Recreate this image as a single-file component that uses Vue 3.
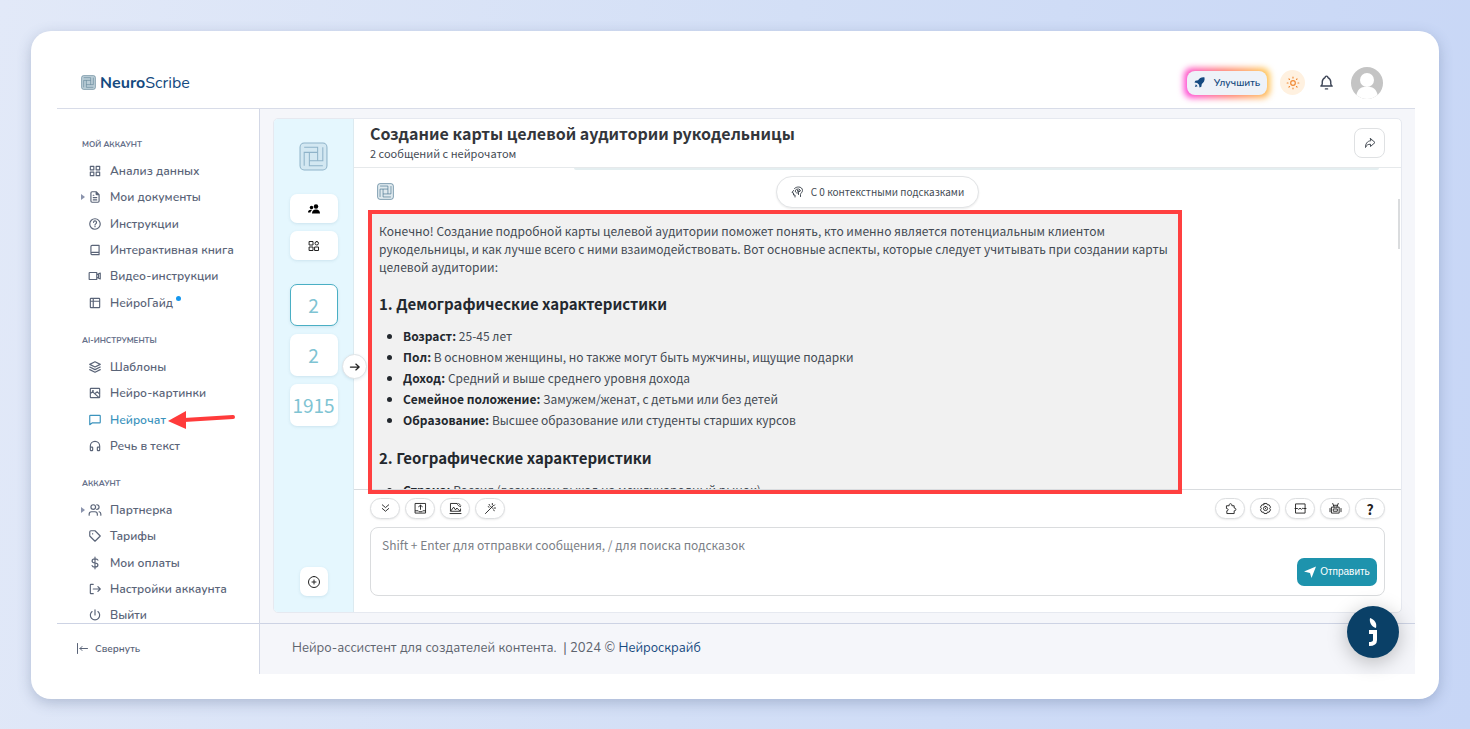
<script setup>
import { ref } from 'vue'

const message = ref('')

const icons = {
  grid: 'M4 4h6v6H4zM14 4h6v6h-6zM4 14h6v6H4zM14 14h6v6h-6z',
  file: 'M14 3v4a1 1 0 0 0 1 1h4M17 21H7a2 2 0 0 1-2-2V5a2 2 0 0 1 2-2h7l5 5v11a2 2 0 0 1-2 2zM9 9h1M9 13h6M9 17h6',
  help: 'M12 3a9 9 0 1 0 0 18 9 9 0 0 0 0-18zM12 16v.5M12 13.500c0-1.800 2.600-1.800 2.600-4a2.500 2.500 0 0 0-5.100-.4',
  book: 'M19 4v16H7a2 2 0 0 1-2-2V6a2 2 0 0 1 2-2zM19 16H7a2 2 0 0 0-2 2',
  video: 'M15 10l6-3v10l-6-3zM3 6h12v12H3a1 1 0 0 1-1-1V7a1 1 0 0 1 1-1zM18 9v6',
  table: 'M5 4h14a1 1 0 0 1 1 1v14a1 1 0 0 1-1 1H5a1 1 0 0 1-1-1V5a1 1 0 0 1 1-1zM4 9h16M9 4v16',
  stack: 'M12 3L3 7.500l9 4.500 9-4.500zM3 12l9 4.500 9-4.500M3 16.500L12 21l9-4.500',
  image: 'M5 4h14a1 1 0 0 1 1 1v14a1 1 0 0 1-1 1H5a1 1 0 0 1-1-1V5a1 1 0 0 1 1-1zM8 8h1v1H8zM4 13l4-3 11 10M12 13l4-3 4 4',
  chat: 'M3 20V5a1 1 0 0 1 1-1h16a1 1 0 0 1 1 1v11a1 1 0 0 1-1 1H7z',
  headphones: 'M4 19v-7a8 8 0 0 1 16 0v7M4 14h3a1 1 0 0 1 1 1v4a1 1 0 0 1-1 1H5a1 1 0 0 1-1-1zM20 14h-3a1 1 0 0 0-1 1v4a1 1 0 0 0 1 1h2a1 1 0 0 0 1-1z',
  users: 'M9 3a4 4 0 1 0 0 8 4 4 0 0 0 0-8zM2 21v-2a4 4 0 0 1 4-4h6a4 4 0 0 1 4 4v2M15 3a4 4 0 0 1 0 8M22 21v-2a4 4 0 0 0-3-4',
  tag: 'M3 11V5a2 2 0 0 1 2-2h7l9 9-9 9-9-9zM8 8v.5',
  dollar: 'M17 7c-.5-1.500-2-2-5-2s-5 .8-5 3.500 2.500 3.300 5 3.500 5 1 5 3.500S15 19 12 19s-4.500-.6-5-2.500M12 2v20',
  exit: 'M9 4H5a1 1 0 0 0-1 1v14a1 1 0 0 0 1 1h4M9 12h12M17 8l4 4-4 4',
  power: 'M7 6a8 8 0 1 0 10 0M12 3v9',
  collapse: 'M3 1v20M23 11H8M12 7l-4 4 4 4',
  bell: 'M10 5a2 2 0 1 1 4 0 7 7 0 0 1 4 6v3a4 4 0 0 0 2 3H4a4 4 0 0 0 2-3v-3a7 7 0 0 1 4-6M10.500 21h3',
  sun: 'M12 8a4 4 0 1 0 0 8 4 4 0 0 0 0-8zM12 2v1.500M12 20.500V22M2 12h1.500M20.500 12H22M5 5l1 1M18 18l1 1M5 19l1-1M18 6l1-1',
  share: 'M13 3l9 8-9 8v-4.500C8 14.500 5 16 3 21c0-7 3-13 10-13.500z',
  tiles: 'M3 3h7v7H3zM17.500 3a3.500 3.500 0 1 0 0 7 3.500 3.500 0 0 0 0-7zM3 14h7v7H3zM14 14h7v7h-7z',
  plus: 'M12 1a11 11 0 1 0 0 22 11 11 0 0 0 0-22zM12 8v8M8 12h8',
  arrow: 'M1 12h21M14 5l8 7-8 7',
  head: 'M8 22v-4H5v-4l-3-1 3-4M7 5c2-2 5-3 8-3 5 0 8 3 8 7 0 4-4 5-4 8v4M12 6a4 4 0 1 0 4 6l-3-2 1-4M16 12l3-3-3-3M13 10h5M15 14v3',
  down: 'M5 4l7 6 7-6M5 12l7 6 7-6',
  upload: 'M1 1h22v21H1zM1 17h6l2 2h6l2-2h6M12 14V5M8 8l4-3 4 3',
  picture: 'M15 1H1v17h22v-5M0 23h24M2 17l6-8 4 6 3-4 6 6M15 1c2 4 4 6 8 7M19 1l4 4',
  wand: 'M1 23L14 10M12 7l5 5M9 3l1 2M16 1v3M21 4l-2 2M23 11h-3M20 17l-1-2M7 8l2 1M14 10l4-4',
  puzzle: 'M4 6h5c-1-6 7-6 6 0h5v5c5-1 5 7 0 6v6H4v-6c4 0 4-5 0-5z',
  gear: 'M9 1h6l1 3 4 0 3 5-2 3 2 3-3 5-4 0-1 3H9l-1-3-4 0-3-5 2-3-2-3 3-5 4 0zM12 7.500a4.500 4.500 0 1 0 0 9 4.500 4.500 0 0 0 0-9zM12 11.500v1',
  panel: 'M2 2h20v20H2zM0 12h6l2 2 3-3 3 3 3-3 2 1h5',
  robot: 'M4 9h16v13H4zM8 13h8v5H8zM9 9L6 1M15 9l3-8M0 12v7M24 12v7M8 5h8',
}

const groups = [
  {
    title: 'Мой аккаунт',
    items: [
      { icon: 'grid', label: 'Анализ данных' },
      { icon: 'file', label: 'Мои документы', nested: true },
      { icon: 'help', label: 'Инструкции' },
      { icon: 'book', label: 'Интерактивная книга' },
      { icon: 'video', label: 'Видео-инструкции' },
      { icon: 'table', label: 'НейроГайд', dot: true },
    ],
  },
  {
    title: 'AI-инструменты',
    items: [
      { icon: 'stack', label: 'Шаблоны' },
      { icon: 'image', label: 'Нейро-картинки' },
      { icon: 'chat', label: 'Нейрочат', active: true },
      { icon: 'headphones', label: 'Речь в текст' },
    ],
  },
  {
    title: 'Аккаунт',
    items: [
      { icon: 'users', label: 'Партнерка', nested: true },
      { icon: 'tag', label: 'Тарифы' },
      { icon: 'dollar', label: 'Мои оплаты' },
      { icon: 'exit', label: 'Настройки аккаунта' },
      { icon: 'power', label: 'Выйти' },
    ],
  },
]

const chats = [
  { count: '2', active: true },
  { count: '2' },
  { count: '1915' },
]

const facts = [
  ['Возраст:', '25-45 лет'],
  ['Пол:', 'В основном женщины, но также могут быть мужчины, ищущие подарки'],
  ['Доход:', 'Средний и выше среднего уровня дохода'],
  ['Семейное положение:', 'Замужем/женат, с детьми или без детей'],
  ['Образование:', 'Высшее образование или студенты старших курсов'],
]

const leftTools = [
  { icon: 'down', label: 'Вниз' },
  { icon: 'upload', label: 'Загрузить файл' },
  { icon: 'picture', label: 'Изображение' },
  { icon: 'wand', label: 'Улучшить запрос' },
]
const rightTools = [
  { icon: 'puzzle', label: 'Расширения' },
  { icon: 'gear', label: 'Параметры' },
  { icon: 'panel', label: 'Панель' },
  { icon: 'robot', label: 'Ассистент' },
]
</script>

<template>
  <div class="page">
    <svg class="defs" aria-hidden="true">
      <symbol id="mark" viewBox="0 0 28 28">
        <rect x="1" y="1" width="26" height="26" rx="4" />
        <g v-for="a in [0, 90, 180, 270]" :key="a" :transform="`rotate(${a} 14 14)`">
          <path d="M5 5H18V18" fill="none" />
        </g>
      </symbol>
    </svg>

    <div class="window">
      <header class="top">
        <a class="brand" href="#">
          <svg class="brand-mark"><use href="#mark" /></svg>
          <span><b>Neuro</b>Scribe</span>
        </a>
        <div class="account">
          <button class="upgrade">
            <svg viewBox="0 0 24 24"><path d="M23 1c-7-1-11 2-14 6L3 8l-2 4 6 1 4 4 1 6 4-2 1-6c4-3 7-7 6-14zM4 16l-2 6 6-2z" /></svg>
            Улучшить
          </button>
          <button class="theme" aria-label="Тема"><svg class="ico" viewBox="0 0 24 24"><path :d="icons.sun" /></svg></button>
          <button class="bell" aria-label="Уведомления"><svg class="ico" viewBox="0 0 24 24"><path :d="icons.bell" /></svg></button>
          <button class="avatar" aria-label="Профиль">
            <svg viewBox="0 0 32 32"><circle cx="16" cy="13" r="7" /><path d="M5 32c0-8 4-12 8-12h6c4 0 8 4 8 12z" /></svg>
          </button>
        </div>
      </header>

      <div class="columns">
        <aside class="side">
          <nav class="menu">
            <section v-for="g in groups" :key="g.title" class="group">
              <h2>{{ g.title }}</h2>
              <ul>
                <li v-for="i in g.items" :key="i.label">
                  <a href="#" :class="{ nested: i.nested, active: i.active }">
                    <svg class="ico" viewBox="0 0 24 24"><path :d="icons[i.icon]" /></svg>
                    {{ i.label }}
                    <i v-if="i.dot" class="dot"></i>
                    <svg v-if="i.active" class="pointer" viewBox="0 0 68 20">
                      <path d="M16 10L65 7" />
                      <path class="tip" d="M0 11L18 1V19z" />
                    </svg>
                  </a>
                </li>
              </ul>
            </section>
          </nav>
          <button class="collapse">
            <svg class="ico" viewBox="0 0 24 24"><path :d="icons.collapse" /></svg>
            Свернуть
          </button>
        </aside>

        <div class="content">
          <main class="main">
            <div class="panel">
              <div class="rail">
                <svg class="rail-mark"><use href="#mark" /></svg>
                <div class="rail-tools">
                  <button aria-label="Команда">
                    <svg class="solid" viewBox="0 0 24 24"><circle cx="16" cy="7" r="4.500" /><circle cx="7" cy="9" r="3.500" /><path d="M8 21c0-5 3-8 8-8s8 3 8 8zM0 19c0-4 3-6 8-5-2 2-3 3-3 5z" /></svg>
                  </button>
                  <button aria-label="Категории"><svg class="ico" viewBox="0 0 24 24"><path :d="icons.tiles" /></svg></button>
                </div>
                <div class="rail-chats">
                  <button v-for="(c, n) in chats" :key="n" :class="{ active: c.active }">{{ c.count }}</button>
                </div>
                <button class="add" aria-label="Новый чат"><svg class="ico" viewBox="0 0 24 24"><path :d="icons.plus" /></svg></button>
                <button class="expand" aria-label="Развернуть"><svg class="ico" viewBox="0 0 24 24"><path :d="icons.arrow" /></svg></button>
              </div>

              <div class="chat">
                <div class="chat-head">
                  <div>
                    <h1>Создание карты целевой аудитории рукодельницы</h1>
                    <p>2 сообщений с нейрочатом</p>
                  </div>
                  <button class="share" aria-label="Поделиться"><svg class="ico" viewBox="0 0 24 24"><path :d="icons.share" /></svg></button>
                </div>

                <div class="thread">
                  <div class="previous"></div>
                  <div class="thread-top">
                    <svg class="bot-mark"><use href="#mark" /></svg>
                    <button class="context">
                      <svg class="ico" viewBox="0 0 24 24"><path :d="icons.head" /></svg>
                      С 0 контекстными подсказками
                    </button>
                  </div>
                  <div class="answer-wrap">
                    <article class="answer">
                      <p>Конечно! Создание подробной карты целевой аудитории поможет понять, кто именно является потенциальным клиентом рукодельницы, и как лучше всего с ними взаимодействовать. Вот основные аспекты, которые следует учитывать при создании карты целевой аудитории:</p>
                      <h3>1. Демографические характеристики</h3>
                      <ul>
                        <li v-for="f in facts" :key="f[0]"><b>{{ f[0] }}</b> {{ f[1] }}</li>
                      </ul>
                      <h3>2. Географические характеристики</h3>
                      <ul>
                        <li><b>Страна:</b> Россия (возможен выход на международный рынок)</li>
                      </ul>
                    </article>
                  </div>
                  <i class="scroll"></i>
                </div>

                <form class="composer" @submit.prevent>
                  <div class="tools">
                    <button v-for="t in leftTools" :key="t.icon" type="button" :aria-label="t.label"><svg class="ico" viewBox="0 0 24 24"><path :d="icons[t.icon]" /></svg></button>
                    <span class="space"></span>
                    <button v-for="t in rightTools" :key="t.icon" type="button" :aria-label="t.label"><svg class="ico" viewBox="0 0 24 24"><path :d="icons[t.icon]" /></svg></button>
                    <button type="button" class="question">?</button>
                  </div>
                  <div class="entry">
                    <textarea v-model="message" aria-label="Сообщение" placeholder="Shift + Enter для отправки сообщения, / для поиска подсказок"></textarea>
                    <button class="send">
                      <svg viewBox="0 0 24 24"><path d="M24 1L0 11l12 3 3 10z" /></svg>
                      Отправить
                    </button>
                  </div>
                </form>
              </div>
            </div>
          </main>
          <footer class="foot">
            Нейро-ассистент для создателей контента. &nbsp;| 2024 © <a href="#">Нейроскрайб</a>
            <button class="support" aria-label="Онлайн-консультант">
              <svg viewBox="0 0 52 52"><path d="M23 12c5 2 7 5 6 10-4-1-7-5-6-10z" /><path class="hook" d="M22 26h6v8c0 3-2 4-6 4" /></svg>
            </button>
          </footer>
        </div>
      </div>
    </div>
  </div>
</template>

<style>
body {
  margin: 0;
}
</style>

<style scoped>
.page {
  box-sizing: border-box;
  height: 100vh;
  min-height: 700px;
  padding: 31px 31px 30px;
  background: linear-gradient(100deg, #e2e9f8, #d3dff6 50%, #c7d6f6);
  color: #5a6478;
  font: 13px/18px Nunito, "Noto Sans", sans-serif;
}
.page * {
  box-sizing: border-box;
}
.defs {
  position: absolute;
  width: 0;
  height: 0;
}
button {
  display: flex;
  align-items: center;
  justify-content: center;
  margin: 0;
  padding: 0;
  border: 0;
  background: #fff;
  color: inherit;
  font: inherit;
}
a {
  color: inherit;
  text-decoration: none;
}
ul, h1, h2, h3, p {
  margin: 0;
  padding: 0;
}
.ico {
  flex: none;
  width: 14px;
  height: 14px;
  overflow: visible;
  fill: none;
  stroke: currentColor;
  stroke-width: 2;
  stroke-linecap: round;
  stroke-linejoin: round;
}
.window {
  display: flex;
  flex-direction: column;
  height: 100%;
  padding: 26px 24px 25px 26px;
  border-radius: 20px;
  background: #fff;
  box-shadow: 0 4px 14px rgba(70, 90, 130, 0.3);
}

/* header */
.top {
  display: flex;
  align-items: center;
  justify-content: space-between;
  flex: none;
  height: 52px;
  padding: 0 32px 0 24px;
  border-bottom: 1px solid #d8dce8;
}
.brand {
  display: flex;
  align-items: center;
  gap: 4px;
  color: #154a80;
  font-size: 16px;
  line-height: 20px;
}
.brand-mark {
  width: 15px;
  height: 15px;
  fill: #b9ccd6;
  stroke: #52788c;
  stroke-width: 1;
}
.account {
  display: flex;
  align-items: center;
}
.upgrade {
  position: relative;
  z-index: 0;
  gap: 9px;
  width: 80px;
  height: 24px;
  margin-right: 13px;
  border-radius: 7px;
  color: #154a80;
  font-size: 10px;
  font-weight: 600;
}
.upgrade::before,
.upgrade::after {
  content: "";
  position: absolute;
  z-index: -1;
  border-radius: 8px;
}
.upgrade::before {
  inset: -3px;
  background: linear-gradient(75deg, #ff3fe0, #ff7a6a 50%, #ffcb4d);
  filter: blur(3px);
}
.upgrade::after {
  inset: 0;
  background: #eef2f8;
}
.upgrade svg {
  width: 11px;
  height: 11px;
  fill: currentColor;
}
.theme {
  width: 25px;
  height: 25px;
  border-radius: 50%;
  background: #fff1e0;
  color: #f08a35;
}
.bell {
  margin: 0 16px 0 13px;
  color: #3e4657;
}
.bell .ico {
  width: 17px;
  height: 17px;
}
.avatar {
  width: 32px;
  height: 32px;
  overflow: hidden;
  border-radius: 50%;
  background: #c4c4c4;
}
.avatar svg {
  width: 32px;
  height: 32px;
  fill: #fff;
}

/* sidebar */
.columns {
  display: flex;
  flex: 1;
  min-height: 0;
}
.side {
  display: flex;
  flex: none;
  flex-direction: column;
  width: 203px;
  border-right: 1px solid #d3d8e6;
}
.menu {
  flex: 1;
  min-height: 0;
  overflow: hidden;
  padding-top: 27px;
}
.group {
  margin-bottom: 16px;
}
.group:last-child {
  margin-bottom: 0;
}
.group h2 {
  height: 22px;
  padding-left: 25px;
  color: #66708a;
  font-size: 8px;
  font-weight: 700;
  line-height: 18px;
  text-transform: uppercase;
}
.group ul {
  list-style: none;
}
.group a {
  position: relative;
  display: flex;
  align-items: center;
  gap: 8px;
  height: 26px;
  padding-left: 31px;
  font-size: 12px;
  font-weight: 600;
}
.group li:nth-child(3n) a {
  height: 27px;
}
.nested::before {
  content: "";
  position: absolute;
  left: 24px;
  border: 3px solid transparent;
  border-left: 4px solid #8b94ad;
  border-right: 0;
}
.group .active {
  color: #3b93bd;
}
.dot {
  width: 5px;
  height: 5px;
  margin: 0 0 9px -5px;
  border-radius: 50%;
  background: #1597ee;
}
.pointer {
  position: absolute;
  left: 111px;
  width: 68px;
  height: 20px;
  fill: none;
  stroke: #ff3b3b;
  stroke-width: 4;
  stroke-linecap: round;
}
.pointer .tip {
  fill: #ff3b3b;
  stroke: none;
}
.collapse {
  justify-content: flex-start;
  gap: 7px;
  flex: none;
  height: 51px;
  padding-left: 19px;
  border-top: 1px solid #cdd3e4;
  font-size: 10px;
  font-weight: 600;
}
.collapse .ico {
  width: 12px;
  height: 12px;
}

/* work area */
.content {
  display: flex;
  flex: 1;
  flex-direction: column;
  min-width: 0;
  background: #f5f6fa;
}
.main {
  flex: 1;
  min-height: 0;
  padding: 9px 13px 10px 13px;
}
.panel {
  display: flex;
  height: 100%;
  border: 1px solid #e6e9f0;
  border-radius: 5px;
  background: #fff;
  font-family: "Noto Sans CJK SC", sans-serif;
  color: #444b54;
}
.rail {
  position: relative;
  display: flex;
  flex: none;
  flex-direction: column;
  align-items: center;
  width: 80px;
  padding: 23px 0 16px;
  border-right: 1px solid #dceaf0;
  border-radius: 4px 0 0 4px;
  background: #e5f7fe;
}
.rail-mark {
  width: 29px;
  height: 29px;
  fill: #d3e8f2;
  stroke: #8fb3c9;
  stroke-width: 1;
}
.rail button {
  border-radius: 7px;
  box-shadow: 0 1px 3px rgba(60, 120, 150, 0.15);
  color: #222;
}
.rail-tools,
.rail-chats {
  display: flex;
  flex-direction: column;
  gap: 8px;
}
.rail-tools {
  margin: 23px 0 24px;
}
.rail-tools button {
  width: 48px;
  height: 29px;
}
.rail-tools .ico {
  width: 12px;
  height: 12px;
}
.solid {
  width: 12px;
  height: 12px;
}
.rail .rail-chats button {
  width: 48px;
  height: 42px;
  color: #7fc4d3;
  font-size: 19px;
}
.rail .rail-chats .active {
  border: 1px solid #4aafc4;
}
.rail .add {
  width: 28px;
  height: 29px;
  margin-top: auto;
}
.add .ico {
  width: 12px;
  height: 12px;
}
.rail .expand {
  position: absolute;
  top: 235px;
  right: -14px;
  z-index: 1;
  width: 25px;
  height: 25px;
  border: 1px solid #dfe3e6;
  border-radius: 50%;
}
.expand .ico {
  width: 10px;
  height: 10px;
  stroke-width: 3;
}
.chat {
  display: flex;
  flex: 1;
  flex-direction: column;
  min-width: 0;
}
.chat-head {
  display: flex;
  align-items: center;
  justify-content: space-between;
  flex: none;
  height: 49px;
  padding: 0 16px;
  border-bottom: 1px solid #e6e9eb;
}
.chat-head h1 {
  color: #33363b;
  font-size: 16px;
  font-weight: 700;
  line-height: 21px;
}
.chat-head p {
  font-size: 11px;
  line-height: 19px;
}
.share {
  width: 31px;
  height: 30px;
  border: 1px solid #dfe1e3;
  border-radius: 8px;
}
.share .ico {
  width: 12px;
  height: 12px;
}
.thread {
  position: relative;
  display: flex;
  flex: 1;
  flex-direction: column;
  min-height: 0;
}
.previous {
  height: 2px;
  margin: 0 22px 0 220px;
  border-radius: 0 0 6px 6px;
  background: #e4eef0;
}
.thread-top {
  display: grid;
  grid-template-columns: 1fr auto 1fr;
  align-items: center;
  flex: none;
  height: 43px;
  padding: 0 23px;
}
.bot-mark {
  width: 17px;
  height: 17px;
  fill: #dfe9ee;
  stroke: #3d6b88;
  stroke-width: 1;
}
.context {
  gap: 8px;
  height: 32px;
  padding: 0 14px;
  border: 1px solid #e2e4e6;
  border-radius: 16px;
  box-shadow: 0 1px 2px rgba(0, 0, 0, 0.08);
  font-size: 10px;
}
.context .ico {
  width: 12px;
  height: 12px;
}
.answer-wrap {
  position: relative;
  flex: 1;
  min-height: 0;
  width: 78%;
  max-width: 807px;
  margin-left: 17px;
}
.answer-wrap::after {
  content: "";
  position: absolute;
  inset: -3px -4px -5px -3px;
  border: 4px solid #ff4040;
}
.answer {
  height: 100%;
  overflow: hidden;
  padding: 9px 8px 0;
  background: #f1f1f1;
  font-size: 12px;
}
.answer h3 {
  margin: 17px 0 10px;
  color: #23282e;
  font-size: 15px;
  font-weight: 700;
  line-height: 22px;
}
.answer ul {
  padding-left: 24px;
}
.answer li {
  line-height: 21px;
}
.answer li::marker,
.answer b {
  color: #23282e;
}
.scroll {
  position: absolute;
  top: 31px;
  right: 1px;
  width: 2px;
  height: 50px;
  background: #dadcde;
}

/* composer */
.composer {
  flex: none;
  padding: 8px 16px 16px;
  border-top: 1px solid #d9dcdf;
}
.tools {
  display: flex;
  gap: 5px;
}
.tools button {
  width: 30px;
  height: 21px;
  border: 1px solid #dcdee0;
  border-radius: 11px;
  box-shadow: 0 1px 2px rgba(0, 0, 0, 0.08);
  color: #222;
}
.tools .ico {
  width: 11px;
  height: 11px;
}
.tools .question {
  font-size: 14px;
  font-weight: 700;
}
.space {
  flex: 1;
}
.entry {
  position: relative;
  height: 69px;
  margin-top: 8px;
}
.entry textarea {
  display: block;
  width: 100%;
  height: 100%;
  padding: 8px 11px;
  border: 1px solid #dadcde;
  border-radius: 8px;
  outline: 0;
  resize: none;
  background: #fff;
  color: inherit;
  font: 12px/18px "Noto Sans CJK SC", sans-serif;
}
.entry textarea::placeholder {
  color: #7b8086;
}
.send {
  position: absolute;
  right: 8px;
  bottom: 10px;
  gap: 4px;
  width: 80px;
  height: 28px;
  border-radius: 7px;
  background: #1e93ad;
  color: #fff;
  font: 10px/14px "Liberation Sans", sans-serif;
}
.send svg {
  width: 12px;
  height: 12px;
  fill: #fff;
}

/* footer */
.foot {
  position: relative;
  flex: none;
  height: 51px;
  padding-left: 32px;
  border-top: 1px solid #cdd3e4;
  color: #5e646e;
  line-height: 48px;
}
.foot a {
  color: #154a80;
}
.support {
  position: absolute;
  right: 16px;
  bottom: 16px;
  width: 52px;
  height: 52px;
  border-radius: 50%;
  background: #0a4067;
  box-shadow: 0 4px 20px rgba(0, 0, 0, 0.25);
}
.support svg {
  width: 52px;
  height: 52px;
  fill: #fff;
}
.support .hook {
  fill: none;
  stroke: #fff;
  stroke-width: 4;
}
</style>
